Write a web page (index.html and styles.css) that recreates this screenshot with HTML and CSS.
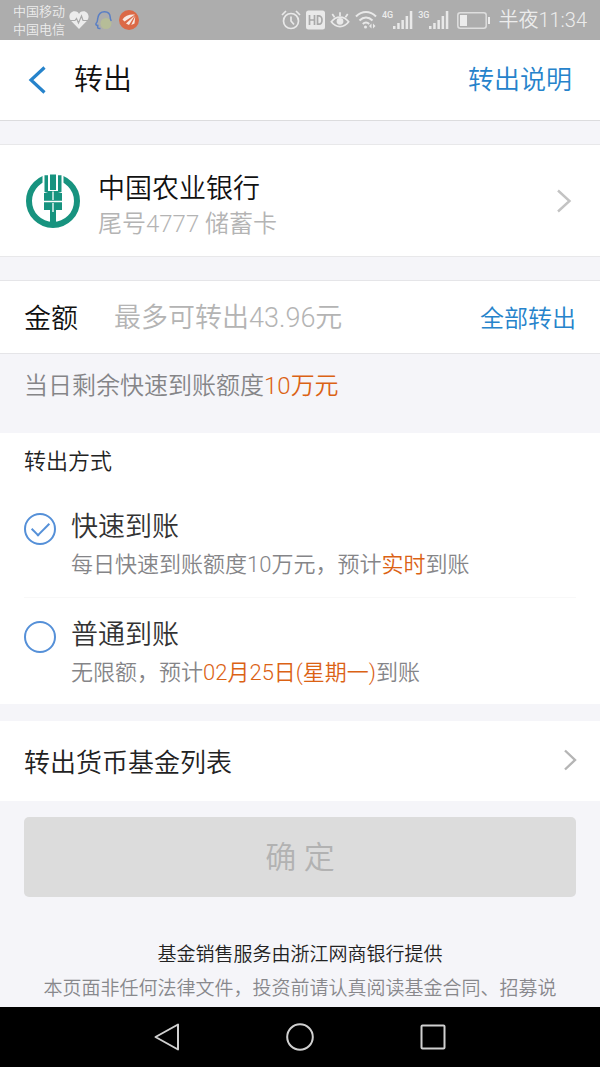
FILE: index.html
```html
<!DOCTYPE html>
<html lang="zh-CN">
<head>
<meta charset="utf-8">
<meta name="viewport" content="width=device-width, initial-scale=1">
<title>转出</title>
<link rel="stylesheet" href="styles.css">
</head>
<body>
<div class="status">
  <div class="carriers"><span>中国移动</span><span>中国电信</span></div>
  <div class="notices">
    <svg width="20" height="20" viewBox="0 0 20 20"><path d="M10 19 2.200 11C-2 6 2 1 5.500 1.200 8 1.200 9.500 2.600 10 4c.5-1.400 2-2.800 4.500-2.800C18 1 22 6 17.800 11z" fill="#ececec"/><path d="M1 10.500h5l1.500-2 2 4.500 3-7 1.500 4.500h5" fill="none" stroke="#aaa" stroke-width="1.200"/></svg>
    <svg width="20" height="20" viewBox="0 0 20 20"><circle cx="12" cy="13.500" r="5.500" fill="#b6bd98"/><path d="M6.500 18.500c-3 .3-3-.5-2.700-3C2.500 15.500 1.500 14.500 2 13.500 4 11.500 3.300 10 3.800 8 4.500 4 7 1.700 10.500 1.700c3.500 0 5.500 2.300 5.700 5.300 0 2 .5 3 1 4" fill="none" stroke="#5a7fc4" stroke-width="1.500"/></svg>
    <svg width="20" height="20" viewBox="0 0 20 20"><circle cx="10" cy="10" r="10" fill="#db6946"/><path d="M3.500 9.500C6 5.500 10.500 4 16 4.500L5.500 11.500zM7 13.500 16 5.300l-6 9.700zM12.200 15 16.300 6.300l-.8 7.200z" fill="#f8e9e2"/></svg>
  </div>
  <div class="system">
    <svg width="20" height="22" viewBox="0 0 20 22" fill="none" stroke="#e9e9e9" stroke-width="1.700"><circle cx="10" cy="12" r="7.500"/><path d="M10 7.500V12l3 3.500M1 6l4-4M19 6l-4-4"/></svg>
    <svg width="19" height="20" viewBox="0 0 19 20"><rect width="19" height="19" y=".5" rx="2.500" fill="#e9e9e9"/><path d="M3.500 5v10M8.500 5v10M3.500 10h5M11.500 5.800V14.200h1.500c4 0 4-8.400 0-8.400z" fill="none" stroke="#a9a9a9" stroke-width="1.700"/></svg>
    <svg width="20" height="20" viewBox="0 0 22 20" fill="none" stroke="#e9e9e9" stroke-width="1.900"><path d="M1.500 12c5-7 14-7 19 0-5 7-14 7-19 0zM11 5.500V1.500M5 7 2.500 3.500M17 7l2.500-3.500"/><circle cx="11" cy="11.500" r="2.800" fill="#e9e9e9"/></svg>
    <svg width="22" height="20" viewBox="0 0 22 20" fill="none" stroke="#e9e9e9" stroke-width="2"><path d="M1 6.500c6-6 14-6 20 0M4.500 10.500c4-4 9-4 13 0M7.800 14c2-2 4.400-2 6.400 0"/><circle cx="10.500" cy="17" r="1.500" fill="#e9e9e9" stroke="none"/><path d="M16.500 13.500 14 16l2.500 2.500zM18 13.500l2.500 2.500-2.500 2.500z" fill="#e9e9e9" stroke="none"/></svg>
    <div class="signal"><span>4G</span><svg width="20" height="20" viewBox="0 0 20 20" fill="#e9e9e9"><path d="M0 16h2.500v3H0zM4.200 13h2.500v6H4.200zM8.400 10h2.500v9H8.400zM12.600 6h2.500v13h-2.500zM16.800 1h2.500v18h-2.500z"/></svg></div>
    <div class="signal"><span>3G</span><svg width="20" height="20" viewBox="0 0 20 20" fill="#e9e9e9"><path d="M0 16h2.500v3H0zM4.200 13h2.500v6H4.200zM8.400 10h2.500v9H8.400zM12.600 6h2.500v13h-2.500zM16.800 1h2.500v18h-2.500z"/></svg></div>
    <svg class="battery" width="34" height="17" viewBox="0 0 34 17"><rect x=".8" y=".8" width="28.400" height="15.400" rx="2.500" fill="none" stroke="#dedede" stroke-width="1.500"/><path d="M3 3h7v11H3zM31 5h2v7h-2z" fill="#ececec"/></svg>
    <span class="clock">半夜11:34</span>
  </div>
</div>

<header class="header">
  <button class="back" aria-label="返回"><svg width="18" height="28" viewBox="0 0 18 28"><path d="M16.500 1.500 3 14l13.500 12.500" fill="none" stroke="#2683cb" stroke-width="3.200"/></svg></button>
  <h1 class="title">转出</h1>
  <a class="help" href="#">转出说明</a>
</header>

<main class="main">
  <button class="bank">
    <svg width="54" height="54" viewBox="0 0 54 54"><circle cx="27" cy="27" r="24" fill="none" stroke="#17937f" stroke-width="6"/><path d="M16.500 0h21v19h-21z" fill="#fff"/><path d="M18.500 1.200H22V17h10V1.200h3.500V18l-3.500 1h4v17h-6v13h-6V36h-6V19h4l-3.500-1z" fill="#17937f"/><path d="M24 .5h6V16h-6z" fill="#17937f"/><path d="M27 17.500V26M27 29v9M18 27.500h18" fill="none" stroke="#fff" stroke-width="1.300"/></svg>
    <span class="bank-text"><span class="bank-name">中国农业银行</span><span class="bank-card">尾号4777 储蓄卡</span></span>
    <svg width="16" height="24" viewBox="0 0 16 24"><path d="M2 1.500 13.500 12 2 22.500" fill="none" stroke="#c3c3c3" stroke-width="2.400"/></svg>
  </button>

  <section class="amount">
    <label for="amount">金额</label>
    <input id="amount" type="text" inputmode="decimal" placeholder="最多可转出43.96元">
    <button class="all">全部转出</button>
  </section>
  <p class="quota">当日剩余快速到账额度<em>10万元</em></p>

  <section class="methods">
    <h2 class="subtitle">转出方式</h2>
    <label class="option">
      <input type="radio" name="method" checked>
      <span class="option-text"><span class="option-name">快速到账</span><span class="option-note">每日快速到账额度10万元，预计<em>实时</em>到账</span></span>
    </label>
    <label class="option">
      <input type="radio" name="method">
      <span class="option-text"><span class="option-name">普通到账</span><span class="option-note">无限额，预计<em>02月25日(星期一)</em>到账</span></span>
    </label>
  </section>

  <a class="funds" href="#">转出货币基金列表
    <svg width="14" height="22" viewBox="0 0 14 22"><path d="M2 1.500 12 11 2 20.500" fill="none" stroke="#b5b5b5" stroke-width="2.400"/></svg>
  </a>

  <button class="submit" disabled>确 定</button>

  <footer class="legal">
    <p class="provider">基金销售服务由浙江网商银行提供</p>
    <p>本页面非任何法律文件，投资前请认真阅读基金合同、招募说</p>
  </footer>
</main>

<nav class="nav">
  <button aria-label="后退"><svg width="28" height="32" viewBox="0 0 28 32"><path d="M25 3.500v25L2.500 16z"/></svg></button>
  <button aria-label="主页"><svg width="32" height="32" viewBox="0 0 32 32"><circle cx="16" cy="16" r="12.800"/></svg></button>
  <button aria-label="最近任务"><svg width="28" height="32" viewBox="0 0 28 32"><rect x="2.500" y="4.500" width="23" height="23" rx="1"/></svg></button>
</nav>
</body>
</html>
```
FILE: styles.css
```css
* { box-sizing: border-box; }

body {
  margin: 0;
  min-height: 100vh;
  display: flex;
  flex-direction: column;
  background: #f5f5f9;
  color: #111;
  font-family: Roboto, "Noto Sans CJK SC", sans-serif;
  font-weight: 350;
}

button, input { font: inherit; color: inherit; border: 0; padding: 0; background: none; }
a { text-decoration: none; color: inherit; }
h1, h2, p { margin: 0; font-weight: inherit; }
em { font-style: normal; color: #db6214; }
svg { display: block; flex: none; }

.status {
  height: 40px;
  padding: 0 13px;
  display: flex;
  align-items: center;
  gap: 4px;
  background: #adadad;
  color: #ececec;
}
.carriers { display: flex; flex-direction: column; padding-top: 2px; font-size: 13px; line-height: 18px; }
.notices { display: flex; gap: 5px; }
.system { margin-left: auto; display: flex; align-items: center; gap: 5px; }
.signal { display: flex; align-items: flex-start; font-size: 9px; line-height: 10px; font-weight: 500; }
.battery { margin-left: 3px; }
.clock { margin-left: 2px; font-size: 20px; line-height: 24px; }

.header {
  height: 81px;
  padding: 0 28px;
  display: flex;
  align-items: center;
  background: #fff;
  border-bottom: 1px solid #dcdcde;
}
.title { margin-left: 28px; font-size: 29px; line-height: 40px; }
.help { margin-left: auto; font-size: 26px; line-height: 40px; color: #2683cb; }

.main { flex: 1; display: flex; flex-direction: column; }

.bank {
  margin-top: 23px;
  height: 113px;
  padding: 0 28px 0 26px;
  display: flex;
  align-items: center;
  gap: 18px;
  background: #fff;
  border: solid #e8e8ea;
  border-width: 1px 0;
  text-align: left;
}
.bank-text { flex: 1; display: flex; flex-direction: column; padding-top: 12px; line-height: 35px; }
.bank-name { font-size: 27px; }
.bank-card { font-size: 24px; color: #b4b4b4; }

.amount {
  margin-top: 23px;
  height: 74px;
  padding: 0 24px 2px;
  display: flex;
  align-items: center;
  gap: 36px;
  background: #fff;
  border: solid #e5e5e8;
  border-width: 1px 0;
  font-size: 27px;
}
.amount input { flex: 1; min-width: 0; height: 40px; padding-top: 4px; outline: 0; }
.amount input::placeholder { color: #b4b4b4; opacity: 1; }
.all { font-size: 24px; color: #2683cb; }

.quota { height: 79px; padding: 12px 24px; font-size: 24px; line-height: 40px; color: #858588; }

.methods { background: #fff; padding: 0 24px; }
.subtitle { height: 57px; line-height: 57px; font-size: 22px; color: #222; }
.option { display: flex; gap: 15px; padding: 19px 0 13px; height: 107px; }
.option + .option { border-top: 1px solid #f8f8f8; }
.option input {
  appearance: none;
  flex: none;
  display: grid;
  place-items: center;
  width: 32px;
  height: 32px;
  margin: 4px 0 0;
  border: 2px solid #5590d8;
  border-radius: 50%;
}
.option input:checked::after {
  content: "";
  width: 15px;
  height: 8px;
  margin-bottom: 4px;
  border: solid #5590d8;
  border-width: 0 0 2px 2px;
  transform: rotate(-45deg);
}
.option-text { display: flex; flex-direction: column; line-height: 37px; }
.option-name { font-size: 27px; color: #333; }
.option-note { font-size: 22px; color: #858588; }

.funds {
  margin-top: 17px;
  height: 80px;
  padding: 0 23px 2px 24px;
  display: flex;
  align-items: center;
  justify-content: space-between;
  background: #fff;
  font-size: 26px;
  color: #222;
}

.submit {
  margin: 16px 24px 0;
  height: 80px;
  padding-bottom: 5px;
  border-radius: 5px;
  background: #dcdcdc;
  color: #b2b2b2;
  font-size: 31px;
}

.legal { padding: 41px 24px 0; text-align: center; font-size: 19px; line-height: 34px; color: #88888c; }
.provider { color: #222; }

.nav {
  height: 60px;
  padding: 0 100px;
  display: flex;
  align-items: center;
  background: #000;
}
.nav button { flex: 1; display: flex; justify-content: center; }
.nav svg { fill: none; stroke: #d0d0d0; stroke-width: 2; stroke-linejoin: round; }
```
